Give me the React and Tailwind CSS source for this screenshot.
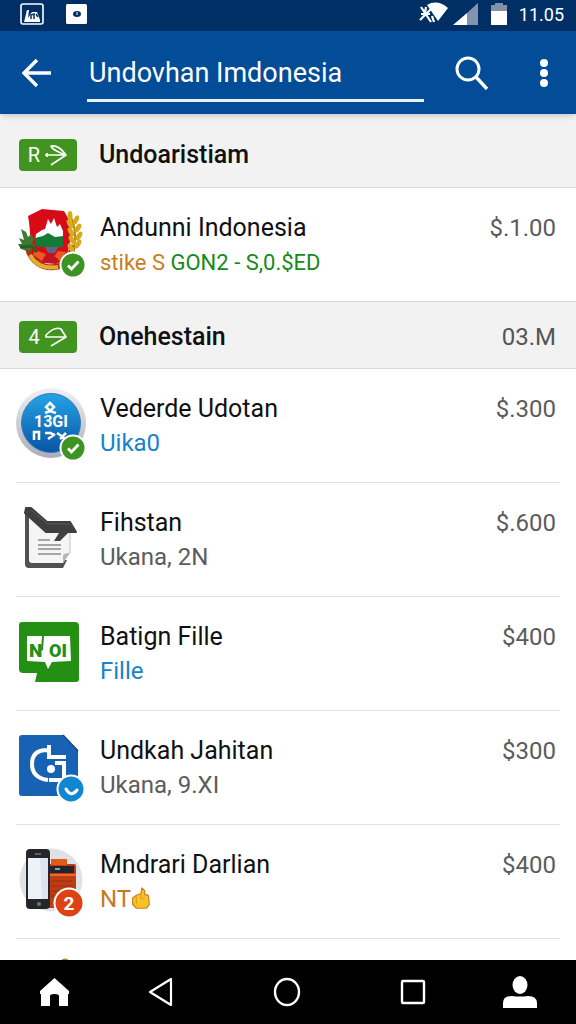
import React, { useState } from "react";

const CheckBadge = () => (
  <g>
    <circle cx="58" cy="60" r="13.5" fill="#fff" />
    <circle cx="58" cy="60" r="11.5" fill="#3d9422" />
    <path d="M53 60.5l3.500 3.500 7-7.500" fill="none" stroke="#fff" strokeWidth="2.8" />
  </g>
);

const CrestIcon = () => (
  <svg viewBox="0 2 72 72" className="size-18 overflow-visible" aria-hidden="true">
    <path d="M13 43c3 13 14 21 27 19 11-1 16-10 18-22" fill="none" stroke="#a93216" strokeWidth="6" />
    <path d="M15 50c6 11 16 14 28 12" fill="none" stroke="#e0b02c" strokeWidth="4" />
    <path d="M13 11l14-7 22 2 4 7c4 15 3 31-4 42l-8 4-13-1-8-5c-7-8-3-22-7-42z" fill="#d60b16" />
    <path d="M20 36l1-7 6-4 3-1 3-10 3 5 3-6 3 9 3-3 3 7v11z" fill="#fff" />
    <path d="M20 33l8-2 5-3 7 4 8-1v11H22c-2-3-3-6-2-9z" fill="#147a35" />
    <path d="M30 42h13l-3 6h-7z" fill="#5d6589" />
    <path d="M20 45l11 4-4 7-9-6zM43 46l8 1-6 9-6-4z" fill="#ea5a23" />
    <path d="M28 54l7-6 8 6-8 3z" fill="#bd1426" />
    <path d="M56 54c5-13 6-27 0-42" fill="none" stroke="#b48612" strokeWidth="2" />
    <g fill="#d8aa20">
      <ellipse cx="55" cy="11" rx="2.5" ry="5" />
      <ellipse cx="61" cy="15" rx="2.5" ry="5" transform="rotate(25 61 15)" />
      <ellipse cx="55" cy="19" rx="2.5" ry="5" transform="rotate(-30 55 19)" />
      <ellipse cx="63" cy="23" rx="2.5" ry="5" transform="rotate(30 63 23)" />
      <ellipse cx="56" cy="27" rx="2.5" ry="5" transform="rotate(-30 56 27)" />
      <ellipse cx="64" cy="31" rx="2.5" ry="5" transform="rotate(30 64 31)" />
      <ellipse cx="57" cy="35" rx="2.5" ry="5" transform="rotate(-30 57 35)" />
      <ellipse cx="63" cy="39" rx="2.5" ry="5" transform="rotate(30 63 39)" />
      <ellipse cx="56" cy="43" rx="2.5" ry="5" transform="rotate(-30 56 43)" />
    </g>
    <path d="M6 24l5 3 2 5 3-3 3 5-2 4 3 3-4 4-4 1-6-2-3-5 4 0-3-6 5 2z" fill="#3c7a34" />
    <path d="M5 42l11-1 6 6" fill="none" stroke="#2e5c28" strokeWidth="3" />
    <CheckBadge />
  </svg>
);

const GlobeIcon = () => (
  <svg viewBox="0 0 72 72" className="size-18 overflow-visible" aria-hidden="true">
    <defs>
      <linearGradient id="rim" x1="0" y1="0" x2="0" y2="1">
        <stop offset="0" stopColor="#eef0f3" />
        <stop offset="1" stopColor="#a9aeb9" />
      </linearGradient>
      <linearGradient id="disc" x1="0" y1="0" x2="0" y2="1">
        <stop offset="0" stopColor="#23a3e6" />
        <stop offset="1" stopColor="#0a55a5" />
      </linearGradient>
    </defs>
    <circle cx="36" cy="35" r="35" fill="url(#rim)" />
    <circle cx="36" cy="35" r="29.5" fill="url(#disc)" stroke="#3c79b2" strokeWidth="1" />
    <path d="M35 15l4 4-4 4-4-4zM30 25l5-2 6 2" fill="none" stroke="#fff" strokeWidth="2.5" />
    <text x="19" y="39" fill="#fff" fontSize="16" fontWeight="700" fontFamily="Roboto, sans-serif">
      13GI
    </text>
    <path
      d="M19 52v-8h5v8M30 45h6l3 3M33 51l7-5M42 45l9 6M45 51l6-6"
      fill="none"
      stroke="#fff"
      strokeWidth="2.5"
    />
    <CheckBadge />
  </svg>
);

const NoteIcon = () => (
  <svg viewBox="0 -3 72 72" className="size-18 overflow-visible" aria-hidden="true">
    <path d="M10 7v52q0 4 4 4h34l4-8-36-1V14z" fill="#515151" />
    <path d="M14 12v43q0 3 3 3h31l7-10V26H28z" fill="#f5f5f5" />
    <path d="M48 58v-7q0-3 7-3z" fill="#b5b5b5" />
    <path d="M55 28v20" stroke="#c4c4c4" strokeWidth="1" />
    <path d="M23 35h12M23 40h23M23 44h23M23 49h23" stroke="#a5a5a5" strokeWidth="2" />
    <path
      d="M11 3h5l16 14h23l6 10H31L10 8z"
      fill="#3f3f3f"
      stroke="#3f3f3f"
      strokeWidth="2"
      strokeLinejoin="round"
    />
    <path d="M16 5l17 14h22" fill="none" stroke="#5a5a5a" strokeWidth="1" />
    <path d="M44 28h9l-8 8h-6z" fill="#414141" />
  </svg>
);

const ChatIcon = () => (
  <svg viewBox="0 -1 72 72" className="size-18 overflow-visible" aria-hidden="true">
    <path d="M7 5h53q4 0 4 4v53q0 3-3 3H20l2-9H8q-4 0-4-4V8q0-3 3-3z" fill="#239013" />
    <path d="M12 19h15l-1 15 2-1 1-14h26l1 25-19 1-4 7-3-7-18-1z" fill="#fff" />
    <text x="14" y="40" fill="#239013" fontSize="19" fontWeight="900" fontFamily="Roboto, sans-serif">
      N
    </text>
    <text x="34" y="40" fill="#239013" fontSize="18" fontWeight="900" fontFamily="Roboto, sans-serif">
      OI
    </text>
  </svg>
);

const FileIcon = () => (
  <svg viewBox="0 -1 72 72" className="size-18 overflow-visible" aria-hidden="true">
    <path d="M7 4h41l15 15v46H7q-3 0-3-3V7q0-3 3-3z" fill="#1762b2" />
    <path d="M48 4l15 16z" stroke="#0c4b93" strokeWidth="1.5" />
    <path
      d="M32 19q-15 0-15 14 0 14 16 16M34 14v12h17M40 32h9v12M34 49h15V32"
      fill="none"
      stroke="#fff"
      strokeWidth="4"
    />
    <circle cx="36" cy="38" r="4" fill="#fff" />
    <circle cx="56" cy="58" r="14.5" fill="#fff" />
    <circle cx="56" cy="58" r="12.5" fill="#1286d2" />
    <path d="M51 58q5 9 11 1" fill="none" stroke="#fff" strokeWidth="3" strokeLinecap="round" />
  </svg>
);

const PhoneIcon = () => (
  <svg viewBox="0 -2 72 72" className="size-18 overflow-visible" aria-hidden="true">
    <circle cx="36" cy="34" r="31.5" fill="#e0e1e4" />
    <path d="M35 18h24q2 0 2 2v42H33z" fill="#bd3c13" />
    <path d="M36 13h16v6H36z" fill="#e45b18" />
    <path d="M34 20h25v7H34z" fill="#22252c" />
    <path d="M40 22h5v2h-5z" fill="#8ba3ba" />
    <path d="M33 29h28" stroke="#ef6930" strokeWidth="2" />
    <path d="M36 35h22M36 40h22M36 45h12M36 50h8" stroke="#982c10" strokeWidth="1" />
    <rect x="11" y="3" width="24" height="60" rx="4" fill="#25262a" />
    <rect x="13" y="12" width="20" height="41" fill="#edf1f8" />
    <path d="M25 12h8v41h-6z" fill="#dde3ef" />
    <path d="M20 8h6" stroke="#777" strokeWidth="1.5" />
    <circle cx="24" cy="58" r="2" fill="#777" />
    <circle cx="54" cy="57" r="15.5" fill="#fff" />
    <circle cx="54" cy="57" r="13.5" fill="#dd4312" />
    <text
      x="54"
      y="64"
      textAnchor="middle"
      fill="#fff"
      fontSize="19"
      fontWeight="700"
      fontFamily="Roboto, sans-serif"
    >
      2
    </text>
  </svg>
);

const ThumbIcon = () => (
  <svg viewBox="0 0 20 26" className="h-6 w-5" aria-hidden="true">
    <path
      d="M1 12l4-3 5-2 1-6 3 3 0 4 4 1 1 10-3 4H5l-4-4z"
      fill="#f8c32a"
      stroke="#c9821a"
      strokeWidth="1.3"
      strokeLinejoin="round"
    />
    <path d="M5 10v9M10 8v5l4-1" fill="none" stroke="#d99a1c" strokeWidth="1" />
  </svg>
);

const ArrowGlyph = ({ curved }) => (
  <svg
    viewBox="0 0 24 24"
    className="size-6"
    fill="none"
    stroke="#fff"
    strokeWidth="1.7"
    strokeLinejoin="round"
    aria-hidden="true"
  >
    {curved ? (
      <path d="M2 10q9-9 15-6l5 8L7 21M2 10v2h20" />
    ) : (
      <path d="M1 12h21L7 22M22 12Q15 2 7 3q1 4 15 9M3 10v4" />
    )}
  </svg>
);

const first = [
  {
    name: "Andunni Indonesia",
    price: "$.1.00",
    icon: CrestIcon,
    note: (
      <span className="text-[22px]">
        <span className="text-[#c87d1e]">stike S</span>{" "}
        <span className="text-[#168a1b]">GON2 - S,0.$ED</span>
      </span>
    ),
  },
];

const second = [
  { name: "Vederde Udotan", price: "$.300", icon: GlobeIcon, note: "Uika0", color: "text-[#1683cb]" },
  { name: "Fihstan", price: "$.600", icon: NoteIcon, note: "Ukana, 2N", color: "text-[#5c5c5c]" },
  { name: "Batign Fille", price: "$400", icon: ChatIcon, note: "Fille", color: "text-[#1683cb]" },
  { name: "Undkah Jahitan", price: "$300", icon: FileIcon, note: "Ukana, 9.XI", color: "text-[#5c5c5c]" },
  {
    name: "Mndrari Darlian",
    price: "$400",
    icon: PhoneIcon,
    note: (
      <span className="flex items-center">
        NT <ThumbIcon />
      </span>
    ),
    color: "text-[#c8781c]",
  },
];

const SectionHeader = ({ label, title, value, curved, className }) => (
  <div className={`flex items-center border-b border-[#d9d9d9] bg-[#f2f2f2] pr-5 pl-[19px] ${className}`}>
    <span className="flex h-8 w-[58px] items-center justify-center gap-1 rounded bg-[#429421] text-xl text-white">
      {label}
      <ArrowGlyph curved={curved} />
    </span>
    <h2 className="ml-[22px] flex-1 text-[25px] leading-8 font-medium">{title}</h2>
    {value && <span className="text-2xl text-[#555]">{value}</span>}
  </div>
);

const Row = ({ item }) => {
  const Icon = item.icon;
  return (
    <div className="flex h-[113px] items-start pt-[19px] pr-5 pl-[15px]">
      <Icon />
      <div className="ml-[13px] flex-1 pt-1">
        <h3 className="text-[25px] leading-[34px]">{item.name}</h3>
        <div className={`text-2xl leading-[34px] ${item.color || ""}`}>{item.note}</div>
      </div>
      <span className="pt-1 text-2xl leading-[34px] text-[#5c5c5c]">{item.price}</span>
    </div>
  );
};

const StatusBar = () => (
  <div className="flex h-[31px] shrink-0 items-center bg-[#002f66] pr-3 pb-1 pl-5 text-white">
    <svg viewBox="0 0 24 24" className="size-6" aria-hidden="true">
      <rect x="1" y="2" width="22" height="20" rx="2" fill="none" stroke="#fff" strokeWidth="1.6" />
      <path d="M4 20L7 8h2L8 16l4-6h5l3 8v2z" fill="#fff" />
      <path d="M11 17v-4l3-1v5M16 12l2 3" stroke="#002f66" strokeWidth="1.5" fill="none" />
    </svg>
    <svg viewBox="0 0 24 24" className="ml-5 size-6" aria-hidden="true">
      <rect x="2" y="2" width="21" height="20" rx="1.5" fill="#fff" />
      <ellipse cx="13" cy="12" rx="4" ry="3" fill="#002f66" />
      <path d="M13 10v3" stroke="#fff" strokeWidth="1" />
    </svg>
    <svg viewBox="0 0 30 24" className="ml-auto h-6 w-[30px]" aria-hidden="true">
      <path d="M2 5l10 15M12 7L1 18M7 5l-1 6M2 12h9M13 14l2 6" stroke="#fff" strokeWidth="2.2" />
      <path d="M8 3q10-6 21 3L19 19z" fill="#fff" />
    </svg>
    <svg viewBox="0 0 26 24" className="ml-1 h-6 w-[26px]" aria-hidden="true">
      <path d="M0 23L14 11v12z" fill="#fff" />
      <path d="M14 11L25 1v22H14z" fill="#8194b0" />
    </svg>
    <svg viewBox="0 0 16 24" className="ml-3 h-6 w-4" aria-hidden="true">
      <path d="M0 3h4V1h8v2h4v8H0z" fill="#8390a8" />
      <path d="M0 9h16v14H0z" fill="#fff" />
    </svg>
    <span className="ml-3 pt-[3px] text-lg leading-6">11.05</span>
  </div>
);

export default function App() {
  const [query, setQuery] = useState("Undovhan Imdonesia");

  return (
    <div className="flex h-screen flex-col bg-white font-['Roboto',sans-serif] text-[#111]">
      <StatusBar />
      <header className="z-10 flex h-[83px] shrink-0 items-center bg-[#024c98] pr-5 pl-[22px] text-white shadow-md">
        <button type="button" aria-label="Back">
          <svg viewBox="0 0 30 30" className="size-[30px]" fill="none" stroke="#fff" strokeWidth="3.4">
            <path d="M29 15H3M15 2L2 15l13 13" />
          </svg>
        </button>
        <input
          type="text"
          aria-label="Search"
          value={query}
          onChange={(e) => setQuery(e.target.value)}
          className="ml-[35px] h-[58px] min-w-0 flex-1 border-b-3 border-[#e4f3fb] pt-[3px] pl-[2px] text-[27px] outline-none"
        />
        <button type="button" aria-label="Find" className="ml-[31px]">
          <svg viewBox="0 0 34 34" className="size-[34px]" fill="none" stroke="#fff" strokeWidth="3">
            <circle cx="13" cy="13" r="11" />
            <path d="M21 21l11 12" strokeWidth="3.4" />
          </svg>
        </button>
        <button type="button" aria-label="More" className="ml-[43px]">
          <svg viewBox="0 0 24 30" className="h-[30px] w-6" fill="#fff">
            <circle cx="12" cy="5" r="4" />
            <circle cx="12" cy="15" r="4" />
            <circle cx="12" cy="25" r="4" />
          </svg>
        </button>
      </header>

      <main className="min-h-0 flex-1 overflow-y-auto [scrollbar-width:none]">
        <SectionHeader label="R" title="Undoaristiam" className="h-[74px] pt-2" />
        <ul>
          {first.map((item) => (
            <li key={item.name}>
              <Row item={item} />
            </li>
          ))}
        </ul>
        <SectionHeader label="4" title="Onehestain" value="03.M" curved className="h-[68px] border-t pt-1" />
        <ul>
          {second.map((item) => (
            <li key={item.name}>
              <Row item={item} />
              <div className="mx-4 border-b border-[#dedfe1]" />
            </li>
          ))}
          <li className="flex h-[113px] pt-[19px] pl-[60px]">
            <svg viewBox="0 0 10 10" className="size-[10px]" aria-hidden="true">
              <circle cx="5" cy="5" r="4.5" fill="#b98a1e" />
            </svg>
          </li>
        </ul>
      </main>

      <nav className="flex h-16 shrink-0 items-center justify-between bg-black px-[38px]">
        <button type="button" aria-label="Home">
          <svg viewBox="0 0 32 32" className="size-8" fill="#fff">
            <path d="M16.500 2L31 15v3h-1v12h-9V20q0-2-4.500-2T12 20v10H3V18H2v-3z" />
          </svg>
        </button>
        <div className="flex items-center gap-[94px]">
          <button type="button" aria-label="Back">
            <svg viewBox="0 0 32 32" className="size-8" fill="none" stroke="#fff" strokeWidth="2.2" strokeLinejoin="round">
              <path d="M27 3v26L6 16z" />
            </svg>
          </button>
          <button type="button" aria-label="Recent">
            <svg viewBox="0 0 32 32" className="size-8" fill="none" stroke="#fff" strokeWidth="2.4">
              <ellipse cx="17" cy="16" rx="12" ry="13" />
            </svg>
          </button>
          <button type="button" aria-label="Windows">
            <svg viewBox="0 0 32 32" className="size-8" fill="none" stroke="#fff" strokeWidth="2.4">
              <rect x="6" y="5" width="22" height="22" rx="1" />
            </svg>
          </button>
        </div>
        <button type="button" aria-label="Profile">
          <svg viewBox="0 0 36 32" className="h-8 w-9" fill="#fff">
            <ellipse cx="18" cy="9" rx="7.500" ry="9" />
            <path d="M1 32v-5q0-7 9-7 8 1 16 0 9 0 9 7v5z" />
          </svg>
        </button>
      </nav>
    </div>
  );
}
